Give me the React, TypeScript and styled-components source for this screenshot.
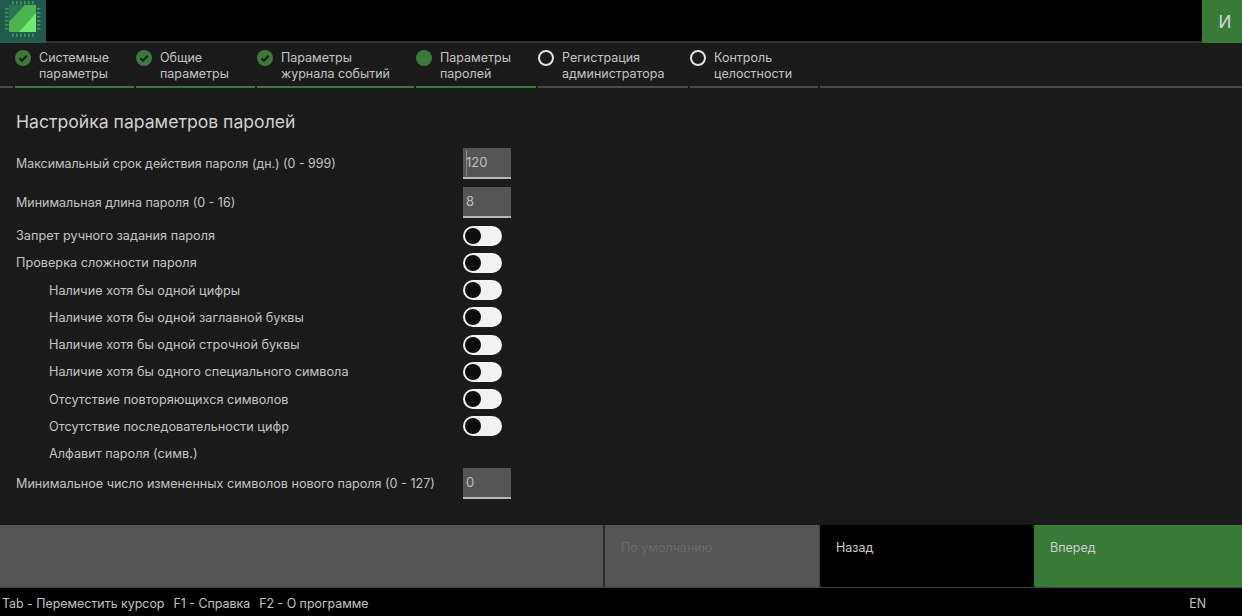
import React from "react";
import styled, { createGlobalStyle } from "styled-components";

const Global = createGlobalStyle`
  html, body { margin: 0; padding: 0; background: #1a1a1a; }
  body { font-family: Inter, "Noto Sans", sans-serif; }
`;

const Page = styled.div`
  width: 1242px;
  height: 616px;
  display: flex;
  flex-direction: column;
  overflow: hidden;
  background: #1a1a1a;
  color: #c9c9c9;
  font-size: 12.5px;
`;

const Header = styled.header`
  height: 41px;
  flex: none;
  display: flex;
  justify-content: space-between;
  background: #000;
  border-bottom: 2px solid #333;
`;

const Logo = styled.svg`
  display: block;
  width: 46px;
  height: 43px;
  flex: none;
`;

const UserBadge = styled.div`
  width: 40px;
  height: 43px;
  box-sizing: border-box;
  padding-left: 6px;
  background: #387a38;
  color: #d6d6d6;
  font-size: 17px;
  display: flex;
  align-items: center;
  justify-content: center;
`;

const Stepper = styled.nav`
  height: 45px;
  flex: none;
  display: flex;
  gap: 2px;
`;

const Step = styled.div<{ $w?: number; $done?: boolean }>`
  ${(p) => (p.$w ? `width: ${p.$w}px; flex: none;` : "flex: 1;")}
  height: 45px;
  box-sizing: border-box;
  border-bottom: 2px solid ${(p) => (p.$done ? "#387a38" : "#4a4a4a")};
  display: flex;
  gap: 8px;
  padding-top: 7px;
`;

const StepIcon = styled.svg`
  width: 16px;
  height: 16px;
  flex: none;
`;

const StepLabel = styled.div`
  line-height: 15.5px;
  font-size: 12.5px;
  color: #c4c4c4;
  white-space: pre-line;
`;

const Content = styled.main`
  flex: 1;
  padding: 23px 0 0 16px;
`;

const Title = styled.h1`
  margin: 0 0 11px;
  height: 22px;
  line-height: 22px;
  font-size: 17.6px;
  font-weight: 400;
  color: #d0d0d0;
`;

const Row = styled.div<{ $h: number; $indent?: boolean; $size?: number }>`
  height: ${(p) => p.$h}px;
  display: grid;
  grid-template-columns: ${(p) => (p.$indent ? "414px" : "447px")} auto;
  align-items: center;
  justify-content: start;
  padding-left: ${(p) => (p.$indent ? 33 : 0)}px;
  color: #c4c4c4;
  font-size: ${(p) => p.$size ?? 12.7}px;
`;

const NumberBox = styled.div`
  width: 48px;
  height: 31px;
  box-sizing: border-box;
  background: #555;
  border-bottom: 2px solid #b8b8b8;
  padding-left: 3px;
  line-height: 29px;
  color: #bdbdbd;
  font-size: 13px;
  display: flex;
`;

const Caret = styled.span`
  width: 1px;
  height: 26px;
  margin-top: 2px;
  margin-right: -1px;
  background: #8a8a8a;
`;

const Toggle = styled.div`
  width: 39px;
  height: 20px;
  box-sizing: border-box;
  border-radius: 10px;
  background: #f2f2f2;
  position: relative;
`;

const Knob = styled.span`
  position: absolute;
  left: 2px;
  top: 2px;
  width: 16px;
  height: 16px;
  border-radius: 50%;
  background: #0d0d0d;
`;

const Footer = styled.div`
  height: 63px;
  flex: none;
  display: flex;
  background: #555;
  border-bottom: 1px solid #444;
  box-sizing: border-box;
`;

const Filler = styled.div`
  width: 603px;
  flex: none;
`;

const Action = styled.div<{ $kind: "disabled" | "dark" | "primary" }>`
  box-sizing: border-box;
  padding: 15px 16px 0;
  line-height: 16px;
  font-size: 12.5px;
  ${(p) =>
    p.$kind === "disabled"
      ? "width: 216px; background:#555; color:#6b6b6b; border-left: 2px solid #2a2a2a;"
      : p.$kind === "dark"
      ? "width: 215px; background:#000; color:#cfcfcf; border-left: 1px solid #444;"
      : "flex: 1; background:#387a38; color:#cfcfcf;"}
`;

const StatusBar = styled.footer`
  height: 28px;
  flex: none;
  background: #000;
  display: flex;
  justify-content: space-between;
  align-items: center;
  padding: 2px 36px 0 2px;
  box-sizing: border-box;
  color: #c4c4c4;
  font-size: 12.4px;
`;

const Hints = styled.div`
  display: flex;
  gap: 9px;
`;

const Check = () => (
  <StepIcon viewBox="0 0 16 16">
    <circle cx="8" cy="8" r="8" fill="#387a38" />
    <path d="M4.4 8.2 7 10.7 11.6 5.7" fill="none" stroke="#1a1a1a" strokeWidth="2" />
  </StepIcon>
);
const Dot = () => (
  <StepIcon viewBox="0 0 16 16">
    <circle cx="8" cy="8" r="8" fill="#387a38" />
  </StepIcon>
);
const Ring = () => (
  <StepIcon viewBox="0 0 16 16">
    <circle cx="8" cy="8" r="7" fill="none" stroke="#e0e0e0" strokeWidth="2" />
  </StepIcon>
);

const pinOffsets = [0, 4, 8, 12, 16, 20];

const steps = [
  { w: 119, t: "Системные\nпараметры", i: <Check />, d: true },
  { w: 119, t: "Общие\nпараметры", i: <Check />, d: true },
  { w: 157, t: "Параметры\nжурнала событий", i: <Check />, d: true },
  { w: 120, t: "Параметры\nпаролей", i: <Dot />, d: true },
  { w: 150, t: "Регистрация\nадминистратора", i: <Ring />, d: false },
  { w: 128, t: "Контроль\nцелостности", i: <Ring />, d: false },
];

const toggles: [string, boolean][] = [
  ["Запрет ручного задания пароля", false],
  ["Проверка сложности пароля", false],
  ["Наличие хотя бы одной цифры", true],
  ["Наличие хотя бы одной заглавной буквы", true],
  ["Наличие хотя бы одной строчной буквы", true],
  ["Наличие хотя бы одного специального символа", true],
  ["Отсутствие повторяющихся символов", true],
  ["Отсутствие последовательности цифр", true],
];

export default function App() {
  return (
    <Page>
      <Global />
      <Header>
        <Logo viewBox="0 0 46 43">
          <rect width="46" height="43" fill="#1f5a4c" />
          <g fill="#3d9a5a">
            {pinOffsets.map((o) => (
              <React.Fragment key={o}>
                <rect x={12 + o} y="1" width="1.6" height="3.5" />
                <rect x={12 + o} y="33.5" width="1.6" height="3.5" />
                <rect x="5" y={8 + o} width="3.5" height="1.6" />
                <rect x="37" y={8 + o} width="3.5" height="1.6" />
              </React.Fragment>
            ))}
          </g>
          <rect x="9" y="5" width="27" height="27" fill="#2a7355" />
          <path d="M9 22 25 5H36V32H9Z" fill="#4cb350" />
          <path d="M19 32 36 13V32Z" fill="#72ea6c" />
        </Logo>
        <UserBadge>И</UserBadge>
      </Header>
      <Stepper>
        <Step $w={13} />
        {steps.map((s) => (
          <Step key={s.t} $w={s.w} $done={s.d}>
            {s.i}
            <StepLabel>{s.t}</StepLabel>
          </Step>
        ))}
        <Step />
      </Stepper>
      <Content>
        <Title>Настройка параметров паролей</Title>
        <Row $h={39} $size={12.4}>
          <span>Максимальный срок действия пароля (дн.) (0 - 999)</span>
          <NumberBox>
            <Caret />
            120
          </NumberBox>
        </Row>
        <Row $h={39} $size={12.5}>
          <span>Минимальная длина пароля (0 - 16)</span>
          <NumberBox>8</NumberBox>
        </Row>
        {toggles.map(([label, indent]) => (
          <Row key={label} $h={27.25} $indent={indent}>
            <span>{label}</span>
            <Toggle>
              <Knob />
            </Toggle>
          </Row>
        ))}
        <Row $h={26} $indent>
          <span>Алфавит пароля (симв.)</span>
        </Row>
        <Row $h={35} $size={12.6}>
          <span>Минимальное число измененных символов нового пароля (0 - 127)</span>
          <NumberBox>0</NumberBox>
        </Row>
      </Content>
      <Footer>
        <Filler />
        <Action $kind="disabled">По умолчанию</Action>
        <Action $kind="dark">Назад</Action>
        <Action $kind="primary">Вперед</Action>
      </Footer>
      <StatusBar>
        <Hints>
          <span>Tab - Переместить курсор</span>
          <span>F1 - Справка</span>
          <span>F2 - О программе</span>
        </Hints>
        <span>EN</span>
      </StatusBar>
    </Page>
  );
}
